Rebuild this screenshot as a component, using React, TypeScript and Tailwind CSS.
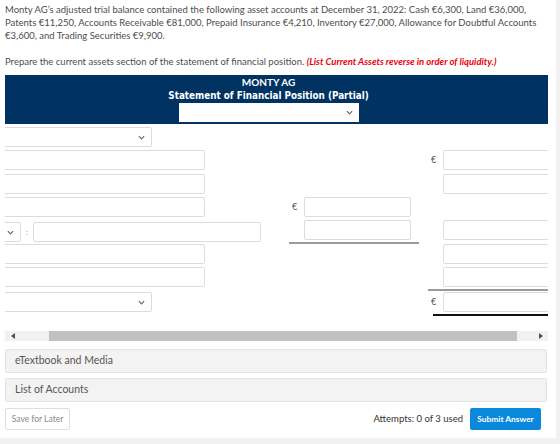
import React from "react";

function Chevron({ className = "" }: { className?: string }) {
  return (
    <svg viewBox="0 0 8 5" className={"w-[7px] h-[5px] " + className}>
      <path d="M1 1 L4 4 L7 1" fill="none" stroke="#6b6b6b" strokeWidth="1.4" />
    </svg>
  );
}

function Select({ w }: { w: string }) {
  return (
    <div className={"h-5 bg-white border border-[#dcdcdc] rounded-[2px] flex items-center justify-end pr-[6px] " + w}>
      <Chevron />
    </div>
  );
}

function Field({ w }: { w: string }) {
  return <div className={"h-5 bg-white border border-[#dcdcdc] rounded-[2px] " + w} />;
}

function Euro() {
  return <span className="w-[15px] pl-[3px] text-[9px] leading-5 text-[#555]">€</span>;
}

export default function App() {
  return (
    <div className="w-[560px] h-[444px] bg-[#f1f1f1] font-['Lato',sans-serif]">
      <div className="w-[556px] h-[438px] bg-white pl-[5px] pr-[9px] pt-[3px]">
        <p className="text-[9.5px] leading-[13px] text-[#4d4d4d]">
          Monty AG’s adjusted trial balance contained the following asset accounts at December 31, 2022: Cash €6,300, Land €36,000,
          <br />
          Patents €11,250, Accounts Receivable €81,000, Prepaid Insurance €4,210, Inventory €27,000, Allowance for Doubtful Accounts
          <br />
          €3,600, and Trading Securities €9,900.
        </p>
        <p className="mt-[13px] text-[9.5px] leading-[13px] text-[#4d4d4d]">
          Prepare the current assets section of the statement of financial position.{" "}
          <span className="text-[#e8000b] italic font-bold">(List Current Assets reverse in order of liquidity.)</span>
        </p>

        <div className="mt-[7px] w-[543px] overflow-hidden">
          <div className="w-[595px] -ml-[34px]">
            {/* heading band */}
            <div className="h-[49px] bg-[#003262] flex flex-col items-center pt-[1px] text-white font-bold">
              <div className="text-[10px] leading-[13px]">MONTY AG</div>
              <div className="text-[9.8px] leading-[13px] font-['DejaVu_Sans_Condensed','DejaVu_Sans',sans-serif]">
                Statement of Financial Position (Partial)
              </div>
              <div className="mt-[1px] w-[180px] h-[19px] bg-white flex items-center justify-end pr-[6px]">
                <Chevron />
              </div>
            </div>

            {/* statement lines */}
            <div className="grid grid-cols-[318px_139px_138px] mt-[3px]">
              <div><Select w="w-[181px]" /></div>
              <div />
              <div />
            </div>
            <div className="grid grid-cols-[318px_139px_138px] mt-[3px]">
              <div><Field w="w-[234px]" /></div>
              <div />
              <div className="flex"><Euro /><Field w="w-[118px]" /></div>
            </div>
            <div className="grid grid-cols-[318px_139px_138px] mt-[4px]">
              <div><Field w="w-[234px]" /></div>
              <div />
              <div className="flex pl-[15px]"><Field w="w-[118px]" /></div>
            </div>
            <div className="grid grid-cols-[318px_139px_138px] mt-[3px]">
              <div><Field w="w-[234px]" /></div>
              <div className="flex"><Euro /><Field w="w-[107px]" /></div>
              <div />
            </div>
            <div className="grid grid-cols-[318px_139px_138px] mt-[3px]">
              <div className="flex items-center">
                <Select w="w-[50px]" />
                <span className="w-[12px] text-center text-[8px] leading-5 text-[#999]">:</span>
                <Field w="w-[228px]" />
              </div>
              <div className="w-[130px] pb-[2px] border-b-2 border-[#9a9a9a]">
                <div className="flex pl-[15px]"><Field w="w-[107px]" /></div>
              </div>
              <div className="flex pl-[15px]"><Field w="w-[118px]" /></div>
            </div>
            <div className="grid grid-cols-[318px_139px_138px]">
              <div><Field w="w-[234px]" /></div>
              <div />
              <div className="flex pl-[15px]"><Field w="w-[118px]" /></div>
            </div>
            <div className="grid grid-cols-[318px_139px_138px] mt-[3px]">
              <div><Field w="w-[234px]" /></div>
              <div />
              <div className="pb-[2px] border-b-2 border-[#9a9a9a]">
                <div className="flex pl-[15px]"><Field w="w-[118px]" /></div>
              </div>
            </div>
            <div className="grid grid-cols-[318px_139px_138px] mt-[1px]">
              <div><Select w="w-[181px]" /></div>
              <div />
              <div className="ml-[5px] pb-[2px] border-b-2 border-[#111]">
                <div className="flex -ml-[5px]"><Euro /><Field w="w-[118px]" /></div>
              </div>
            </div>
          </div>
        </div>

        {/* horizontal scroll bar */}
        <div className="mt-[15px] w-[543px] h-[10px] bg-[#f1f1f1] flex items-center">
          <div className="w-[15px] flex justify-center">
            <div className="w-0 h-0 border-y-[3px] border-y-transparent border-r-[4px] border-r-[#505050]" />
          </div>
          <div className="flex-1 h-full">
            <div className="ml-[29px] w-[468px] h-full bg-[#c1c1c1]" />
          </div>
          <div className="w-[15px] flex justify-center">
            <div className="w-0 h-0 border-y-[3px] border-y-transparent border-l-[4px] border-l-[#505050]" />
          </div>
        </div>

        <div className="mt-[8px] w-[542px] h-[24px] bg-[#f3f3f3] border border-[#e4e4e4] rounded-[2px] flex items-center pl-[9px] text-[10.5px] text-[#555]">
          eTextbook and Media
        </div>
        <div className="mt-[5px] w-[542px] h-[24px] bg-[#f3f3f3] border border-[#e4e4e4] rounded-[2px] flex items-center pl-[9px] text-[10.5px] text-[#555]">
          List of Accounts
        </div>

        <div className="mt-[6px] w-[542px] flex items-center">
          <div className="w-[65px] h-[22px] border border-[#dedede] rounded-[2px] bg-white flex items-center justify-center text-[8.5px] text-[#8a8a8a]">
            Save for Later
          </div>
          <div className="ml-auto text-[9.5px] text-[#333]">Attempts: 0 of 3 used</div>
          <div className="ml-[7px] mr-[6px] w-[71px] h-[22px] rounded-[2px] bg-[#0a88dc] flex items-center justify-center text-[8.4px] font-bold text-white">
            Submit Answer
          </div>
        </div>
      </div>
    </div>
  );
}
